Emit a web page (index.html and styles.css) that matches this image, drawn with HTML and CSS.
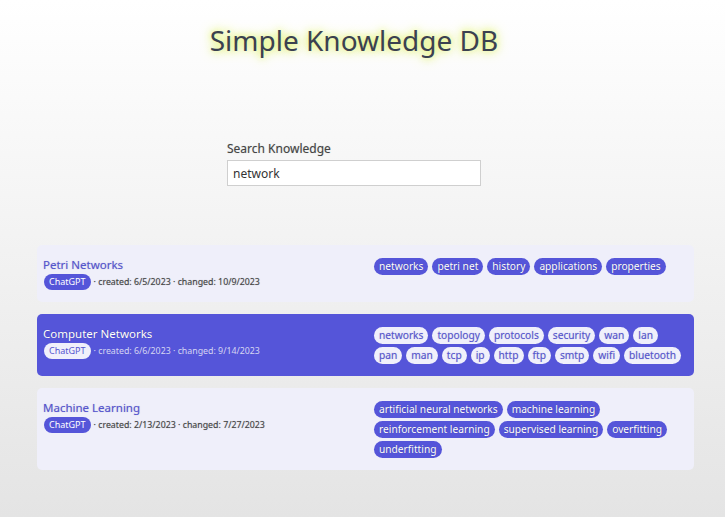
FILE: index.html
```html
<!DOCTYPE html>
<html>
<head>
<meta charset="utf-8">
<link rel="stylesheet" href="styles.css">
</head>
<body>
<header class="header">
  <h1 class="title">Simple Knowledge DB</h1>
  <div class="search">
    <label class="search-label" for="q">Search Knowledge</label>
    <input class="search-input" id="q" type="text" value="network">
  </div>
</header>
<main class="list">
  <article class="card">
    <div class="card-main">
      <div class="card-title">Petri Networks</div>
      <div class="card-meta"><span class="badge">ChatGPT</span><span class="meta-text">· created: 6/5/2023 · changed: 10/9/2023</span></div>
    </div>
    <div class="tags">
      <span class="tag">networks</span><span class="tag">petri net</span><span class="tag">history</span><span class="tag">applications</span><span class="tag">properties</span>
    </div>
  </article>
  <article class="card card-active">
    <div class="card-main">
      <div class="card-title">Computer Networks</div>
      <div class="card-meta"><span class="badge">ChatGPT</span><span class="meta-text">· created: 6/6/2023 · changed: 9/14/2023</span></div>
    </div>
    <div class="tags">
      <span class="tag">networks</span><span class="tag">topology</span><span class="tag">protocols</span><span class="tag">security</span><span class="tag">wan</span><span class="tag">lan</span><span class="tag">pan</span><span class="tag">man</span><span class="tag">tcp</span><span class="tag">ip</span><span class="tag">http</span><span class="tag">ftp</span><span class="tag">smtp</span><span class="tag">wifi</span><span class="tag">bluetooth</span>
    </div>
  </article>
  <article class="card">
    <div class="card-main">
      <div class="card-title">Machine Learning</div>
      <div class="card-meta"><span class="badge">ChatGPT</span><span class="meta-text">· created: 2/13/2023 · changed: 7/27/2023</span></div>
    </div>
    <div class="tags">
      <span class="tag">artificial neural networks</span><span class="tag">machine learning</span><span class="tag">reinforcement learning</span><span class="tag">supervised learning</span><span class="tag">overfitting</span><span class="tag">underfitting</span>
    </div>
  </article>
</main>
</body>
</html>
```

FILE: styles.css
```css
html, body {
  margin: 0;
  padding: 0;
}
body {
  min-height: 517px;
  background: linear-gradient(to bottom, #ffffff 0%, #f3f3f3 45%, #e4e4e4 100%);
  font-family: "Noto Sans", "Open Sans", sans-serif;
  color: #444;
}
.header {
  padding: 22px 17px 0 0;
}
.title {
  margin: 0;
  text-align: center;
  font-size: 28px;
  font-weight: 400;
  line-height: 36px;
  color: #3b4150;
  text-shadow: 0 0 12px rgba(222, 242, 80, 0.95), 0 0 6px rgba(230, 248, 110, 0.8);
}
.search {
  width: 254px;
  margin: 84px auto 0;
  display: flex;
  flex-direction: column;
}
.search-label {
  font-size: 12px;
  line-height: 14px;
  color: #444;
  margin-bottom: 4px;
  text-shadow: 0 0 1px rgba(0,0,0,0.25);
}
.search-input {
  box-sizing: border-box;
  width: 254px;
  height: 26px;
  border: 1px solid #cfcfcf;
  background: #fff;
  padding: 0 5px;
  font-family: inherit;
  font-size: 12px;
  color: #333;
  outline: none;
}
.list {
  margin-top: 59px;
  padding: 0 31px 0 37px;
  display: flex;
  flex-direction: column;
  gap: 12px;
}
.card {
  background: #efeffa;
  border-radius: 5px;
  padding: 12px 6px;
  display: grid;
  grid-template-columns: 1fr 1fr;
  column-gap: 17px;
}
.card-title {
  font-size: 11.5px;
  line-height: 15px;
  color: #5555d0;
  text-shadow: 0 0 1px rgba(40,40,120,0.35);
}
.card-meta {
  display: flex;
  align-items: center;
  height: 16px;
  margin-top: 2px;
}
.badge {
  background: #5555d9;
  color: #fff;
  font-size: 9px;
  line-height: 16px;
  height: 16px;
  padding: 0 5px;
  border-radius: 8px;
  margin-left: 1px;
  margin-right: 3px;
}
.meta-text {
  font-size: 8.8px;
  line-height: 12px;
  color: #444;
  text-shadow: 0 0 1px rgba(0,0,0,0.3);
}
.tags {
  display: flex;
  flex-wrap: wrap;
  gap: 3px 4px;
  align-content: flex-start;
  margin-top: 1px;
}
.tag {
  background: #5555d9;
  color: #fff;
  font-size: 10.2px;
  line-height: 17px;
  height: 17px;
  padding: 0 5px;
  border-radius: 8.5px;
  text-shadow: 0 0 1px rgba(0,0,0,0.3);
}
.card-active {
  background: #5555d9;
}
.card-active .card-title {
  color: #fff;
  text-shadow: 0 0 1px rgba(0,0,0,0.3);
}
.card-active .badge {
  background: #f0f0fb;
  color: #5555d0;
}
.card-active .meta-text {
  color: #d6d6f2;
  text-shadow: none;
}
.card-active .tag {
  background: #f0f0fb;
  color: #5555d0;
  text-shadow: 0 0 1px rgba(40,40,120,0.3);
}
```
